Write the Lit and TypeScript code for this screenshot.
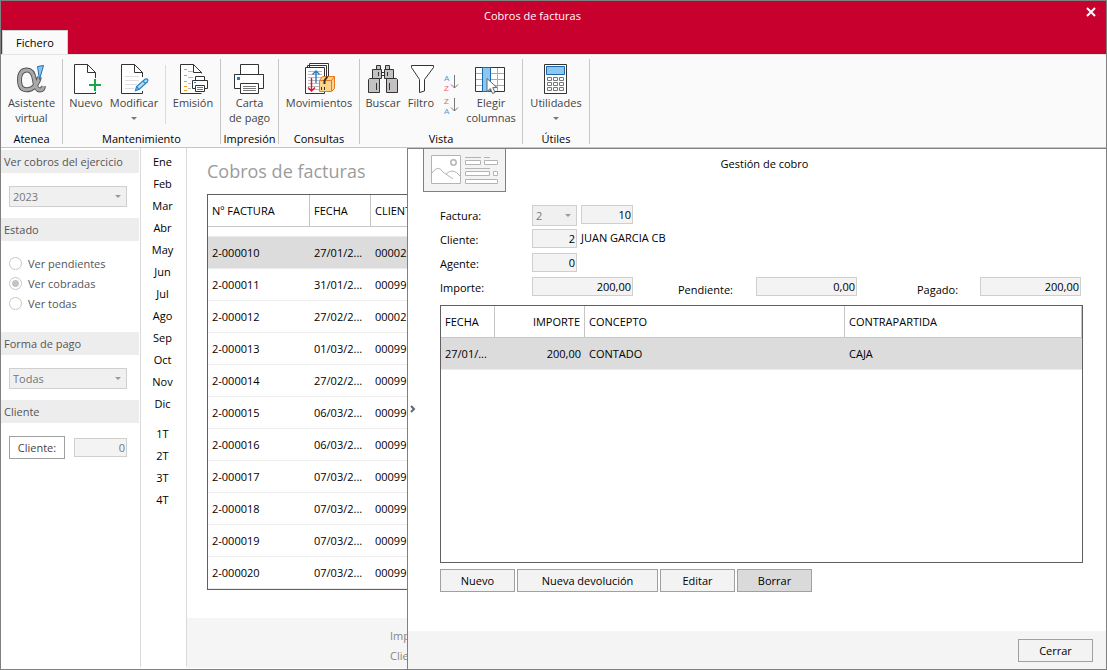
import { LitElement, html, css, svg, nothing } from "lit";
import { customElement } from "lit/decorators.js";
import { classMap } from "lit/directives/class-map.js";

const logoLoop = "M23.5 14Q21 23 15 26Q3.5 29.5 3.5 17Q3.5 7 11 7Q17 7 18.5 17Q19.5 27 24 27Q27 27 27.5 23";

const icons: Record<string, unknown> = {
  logo: svg`
    <path d=${logoLoop} stroke="#555" stroke-width="5"/>
    <path d=${logoLoop} stroke="#a9a9a9" stroke-width="3"/>
    <path d="M21.5 3.5L27.5 2.5L23.5 16.5Z" fill="#8cc4f0" stroke="#1f6fb5"/>`,
  nuevo: svg`
    <path d="M25.5 15V9.5L17.5 1.5H4.5V30.5H25.5V29M17.5 1.5V9.5H25.5" fill="#fff" stroke="#333"/>
    <path d="M25 16V28M19 22H31" stroke="#1aa64b" stroke-width="2"/>`,
  modificar: svg`
    <path d="M24.5 14V9.5L16.5 1.5H3.5V30.5H24.5V28M16.5 1.5V9.5H24.5" fill="#fff" stroke="#333"/>
    <path d="M7 13.5H21M7 17.5H21M7 21.5H19M7 25.5H16" stroke="#dedede"/>
    <path d="M17.5 27.5L18.6 23.6L27 16.3Q28.6 15.2 29.6 16.4Q30.4 17.6 29.2 19L21 26.4ZM18.6 23.6L21 26.4M25 18L27.4 20.6" fill="#b9dcf5" stroke="#2484c6" stroke-width="1.2"/>`,
  emision: svg`
    <path d="M24.5 10.5V9.5L16.5 1.5H3.5V30.5H24.5M16.5 1.5V9.5H24.5" fill="#fff" stroke="#333"/>
    <path d="M7 6.5H10M7 12.5H10M7 18.5H10M7 23.5H10M7 27.5H10" stroke="#f09a1a"/>
    <path d="M11 8.5H16M11 14.5H16M11 20.5H14M11 25.5H14" stroke="#bbb"/>
    <path d="M18.5 17.5V13.5H27.5V17.5M18.5 25.5H15.5V17.5H30.5V25.5H27.5M18.5 22.5H27.5V28.5H18.5Z" fill="#fff" stroke="#333"/>
    <path d="M20 24.5H26M20 26.5H26" stroke="#777"/><path d="M17 19.5H19" stroke="#2484c6"/>`,
  carta: svg`
    <path d="M6.5 11.5V1.5H24.5V11.5M6.5 25.5H0.5V11.5H29.5V25.5H24.5M6.5 20.5H24.5V30.5H6.5Z" fill="#fff" stroke="#333"/>
    <path d="M0.5 11.5H29.5" stroke="#333"/>
    <path d="M9 23.5H22M9 25.5H22M9 27.5H22" stroke="#777"/>
    <path d="M3 14H6V17H3Z" fill="#1e7fca"/>`,
  movimientos: svg`
    <path d="M6.5 5V0.5H25.5V14M4.5 5V2.5H23.5V14M2.5 4.5H21.5V30.5H2.5Z" fill="#fff" stroke="#333"/>
    <path d="M5 8.5H19M5 11.5H19M5 14.5H19M5 17.5H16M5 20.5H16M5 23.5H16M5 26.5H16" stroke="#bbb"/>
    <path d="M13 20V8M9.5 11.5L13 8L16.5 11.5" fill="none" stroke="#1e7fca" stroke-width="1.4"/>
    <path d="M8.5 15V28M5 24.5L8.5 28L12 24.5" fill="none" stroke="#e0102f" stroke-width="1.4"/>
    <path d="M16.5 17.5L19.5 13.5H31.5V25.5L28.5 28.5H16.5Z" fill="#f9d48a" stroke="#e77a25"/>
    <path d="M16.5 17.5H28.5V28.5M28.5 17.5L31.5 13.5" stroke="#e77a25"/>
    <path d="M21.5 21V17.5L24.5 13.5" fill="none" stroke="#333" stroke-width="2"/>
    <path d="M18.5 24V27M21.5 24V27" stroke="#333"/>`,
  buscar: svg`
    <g fill="#c3c1c1" stroke="#333">
      <path d="M14 9.5H18V12.5H14Z" fill="#fff"/>
      <path d="M9.5 6.5V2.5H13.5V6.5M18.5 6.5V2.5H22.5V6.5"/>
      <path d="M5.5 6.5H14.5V15.5H5.5ZM17.5 6.5H26.5V15.5H17.5Z"/>
      <path d="M2.5 15.5H12.5V29.5H1.5V16.5ZM19.5 15.5H29.5L30.5 16.5V29.5H19.5Z"/>
      <path d="M11.5 9V13M20.5 9V13M9.5 20V27M22.5 20V27" fill="none"/>
    </g>`,
  filtro: svg`<path d="M6.5 2.5H28.5V4.5L19.5 16.5V28L14.5 29.5V16.5L6.5 4.5Z" fill="#fff" stroke="#333"/>`,
  elegir: svg`
    <path d="M0.5 4.5H29.5V28.5H0.5Z" fill="#fff"/>
    <path d="M1 10.5H29M1 16.5H29M1 22.5H29M22.5 5V28" stroke="#aaa"/>
    <path d="M0.5 4.5H29.5V28.5H0.5Z" fill="none" stroke="#333"/>
    <path d="M7.5 4.5H15.5V28.5H7.5Z" fill="#8ec6ee" stroke="#1668b0"/>
    <path d="M12 15.5V28.5L15.3 25.6L17.6 30.5L20 29.4L17.8 24.6H22Z" fill="#fff" stroke="#666"/>`,
  utilidades: svg`
    <path d="M4.5 1.5H26.5V30.5H4.5Z" fill="#fff" stroke="#333"/>
    <path d="M6.5 3.5H24.5V11.5H6.5Z" fill="#8ec6ee" stroke="#1668b0"/>
    <path d="M7.5 14.5H11.5V17.5H7.5ZM13.5 14.5H17.5V17.5H13.5ZM19.5 14.5H23.5V17.5H19.5ZM7.5 19.5H11.5V22.5H7.5ZM13.5 19.5H17.5V22.5H13.5ZM19.5 19.5H23.5V22.5H19.5ZM7.5 24.5H11.5V27.5H7.5ZM13.5 24.5H17.5V27.5H13.5ZM19.5 24.5H23.5V27.5H19.5Z" fill="none" stroke="#777"/>`,
};

const invoices: [string, string, string][] = [
  ["2-000010", "27/01/2...", "00002"],
  ["2-000011", "31/01/2...", "00099"],
  ["2-000012", "27/02/2...", "00002"],
  ["2-000013", "01/03/2...", "00099"],
  ["2-000014", "27/02/2...", "00099"],
  ["2-000015", "06/03/2...", "00099"],
  ["2-000016", "06/03/2...", "00099"],
  ["2-000017", "07/03/2...", "00099"],
  ["2-000018", "07/03/2...", "00099"],
  ["2-000019", "07/03/2...", "00099"],
  ["2-000020", "07/03/2...", "00099"],
];

const months = ["Ene", "Feb", "Mar", "Abr", "May", "Jun", "Jul", "Ago", "Sep", "Oct", "Nov", "Dic"];
const quarters = ["1T", "2T", "3T", "4T"];

@customElement("app-root")
export class AppRoot extends LitElement {
  static styles = css`
    :host {
      display: block;
      font-family: "Open Sans", "Noto Sans", sans-serif;
      font-size: 11px;
      line-height: 15px;
      color: #000;
    }
    * { box-sizing: border-box; }
    button, input, select { font: inherit; color: inherit; margin: 0; border-radius: 0; }
    button { padding: 0; border: 0; background: none; white-space: nowrap; }
    svg { display: block; fill: none; }
    .window {
      display: flex; flex-direction: column; height: 100vh; min-height: 640px;
      border: 1px solid #808080; background: #fff; overflow: hidden;
    }
    .titlebar { display: grid; grid-template-columns: 1fr 42px; height: 29px; background: #c8002d; color: #fff; text-align: center; }
    .titlebar h1 { margin: 0; padding-top: 7px; font-size: 11px; font-weight: 400; }
    .close { display: flex; justify-content: center; padding-top: 6px; margin-left: 12px; }
    .tabs { display: flex; height: 24px; padding-left: 1px; background: #c8002d; }
    .tab { width: 66px; background: #fafafa; border: 1px solid #d0d0d0; border-bottom: 0; }
    .ribbon { display: flex; height: 94px; padding: 4px 0 3px; background: #fafafa; border-bottom: 1px solid #c6c6c6; border-top: 1px solid #e4e4e4; }
    .group { display: flex; flex-direction: column; justify-content: space-between; border-right: 1px solid #c6c6c6; }
    .tools { display: flex; }
    .group-name { height: 13px; white-space: nowrap; display: flex; justify-content: center; }
    .tool { display: flex; flex-direction: column; align-items: center; padding-top: 4px; color: #444; }
    .arrow { margin-top: 7px; border: 3px solid transparent; border-top-color: #777; border-bottom: 0; }
    .rule { width: 1px; height: 59px; margin: 6px 0 0 6px; background: #dcdcdc; }
    .sorts { display: flex; flex-direction: column; width: 30px; padding-top: 14px; gap: 3px; align-items: center; }
    .w30 { width: 30px; } .w46 { width: 46px; } .w50 { width: 50px; } .w54 { width: 54px; }
    .w57 { width: 57px; } .w61 { width: 61px; } .w66 { width: 66px; } .w80 { width: 80px; }
    .vista { padding-right: 6px; }
    .body { flex: 1; display: flex; min-height: 0; }
    .filters { width: 140px; border-right: 1px solid #dadada; color: #555; padding-top: 2px; margin-bottom: 2px; }
    .filters h2 { margin: 0 1px 0 0; padding: 4px 3px; height: 23px; background: #ededed; font-size: 11px; font-weight: 400; white-space: nowrap; }
    .field { padding: 13px 13px 11px 8px; }
    .pick { position: relative; display: block; height: 21px; }
    .pick select {
      appearance: none; width: 100%; height: 21px; padding: 0 3px; border: 1px solid #cfcfcf;
      background: #f0f0f0; color: #777; opacity: 1; display: block;
    }
    .pick::after {
      content: ""; position: absolute; right: 6px; top: 9px;
      border: 3px solid transparent; border-top-color: #999; border-bottom: 0; pointer-events: none;
    }
    .radios { display: flex; flex-direction: column; gap: 5px; padding: 15px 8px 20px; height: 91px; }
    .radios label { display: flex; align-items: center; gap: 6px; }
    .radios input { appearance: none; width: 13px; height: 13px; border: 1px solid #c8c8c8; border-radius: 50%; background: #fff; }
    .radios input:checked { background: radial-gradient(circle, #c4c4c4 3px, #fff 4px); }
    .client { display: flex; align-items: center; gap: 9px; padding: 13px 13px 0 8px; }
    .client .btn { width: 56px; background: #fff; color: #444; }
    .client input { flex: 1; min-width: 0; color: #777; }
    .box { height: 19px; padding: 0 1px 1px; border: 1px solid #cfcfcf; background: #f3f3f3; text-align: right; }
    .btn { height: 23px; border: 1px solid #a0a0a0; background: #f3f3f3; }
    .btn.on { background: #dadada; }
    .periods { display: flex; flex-direction: column; width: 46px; border-right: 1px solid #dadada; padding: 2px 2px 0 0; margin-bottom: 2px; }
    .periods button { height: 22px; }
    .periods .gap { margin-top: 8px; }
    .list { flex: 0 0 220px; display: flex; flex-direction: column; overflow: hidden; }
    .list h2 { margin: 0; padding: 9px 0 9px 20px; font-size: 18px; line-height: 28px; font-weight: 400; color: #9c9c9c; white-space: nowrap; }
    .frame { margin-left: 20px; width: 400px; border: 1px solid #606060; }
    table { border-collapse: separate; border-spacing: 0; table-layout: fixed; width: 100%; font-size: 11px; }
    th { height: 32px; padding: 0 4px; font-weight: 400; text-align: left; border-right: 1px solid #c6c6c6; border-bottom: 1px solid #c6c6c6; }
    td { height: 32px; padding: 0 4px; border-bottom: 1px solid #ececec; white-space: nowrap; overflow: hidden; }
    .spacer td { height: 10px; }
    .sel td { background: #dcdcdc; }
    .right { text-align: right; }
    .totals { margin-top: auto; margin-bottom: 1px; padding: 8px 0 2px 203px; height: 50px; background: #f5f5f5; color: #868686; line-height: 20px; white-space: nowrap; }
    .panel { flex: 1; min-width: 0; display: flex; flex-direction: column; border-left: 1px solid #808080; border-top: 1px solid #808080; position: relative; }
    .panel-head { position: relative; margin-left: 15px; height: 43px; }
    .panel-head h2 { margin: 0; padding-top: 7px; font-size: 11px; font-weight: 400; text-align: center; }
    .badge { position: absolute; left: 0; top: 0; width: 83px; height: 43px; border: 1px solid #808080; border-top: 0; background: #f3f3f3; }
    .handle { position: absolute; left: 2px; top: 256px; }
    .content { flex: 1; display: flex; flex-direction: column; padding: 13px 23px 39px 32px; min-height: 0; }
    .form { display: flex; flex-direction: column; gap: 5px; padding-right: 2px; }
    .row { display: flex; align-items: flex-start; height: 19px; gap: 4px; }
    .row > label { flex: 0 0 88px; padding-top: 3px; }
    .row > output { padding-top: 1px; }
    .s45 { width: 45px; } .s52 { width: 52px; } .s101 { width: 101px; }
    .amounts { display: flex; justify-content: space-between; }
    .amount { display: flex; align-items: flex-end; height: 19px; }
    .amount > label { line-height: 13px; }
    .amount.mid { padding-right: 15px; }
    .amount.mid label { width: 78px; }
    .amount.end label { width: 63px; }
    .grid { flex: 1; margin-top: 9px; border: 1px solid #606060; }
    .actions { display: flex; gap: 2px; margin-top: 6px; }
    .b75 { width: 75px; } .b141 { width: 141px; }
    .panel-foot { display: flex; justify-content: flex-end; padding: 8px 13px 6px; background: #f4f4f4; height: 38px; }
  `;

  private tool(icon: string, width: string, first: string, second?: string, arrow = false) {
    return html`<button class="tool ${width}">
      <svg width="32" height="32" viewBox="0 0 32 32" aria-hidden="true">${icons[icon]}</svg>
      <span>${first}</span>${second ? html`<span>${second}</span>` : nothing}${arrow ? html`<i class="arrow"></i>` : nothing}
    </button>`;
  }

  private group(name: string, tools: unknown, extra = "") {
    return html`<div class="group"><div class="tools ${extra}">${tools}</div><div class="group-name">${name}</div></div>`;
  }

  private sort(top: string, bottom: string) {
    const color = (c: string) => (c === "A" ? "#4a9cd6" : "#ea6464");
    return html`<button aria-label="Ordenar ${top}-${bottom}">
      <svg width="18" height="20" viewBox="0 0 18 20" font-size="8" font-family="Liberation Sans, sans-serif">
        <text x="2" y="8" fill=${color(top)}>${top}</text>
        <text x="2" y="18" fill=${color(bottom)}>${bottom}</text>
        <path d="M12.5 2V15M9 11.5L12.5 15L16 11.5" stroke="#777"/>
      </svg></button>`;
  }

  render() {
    return html`<div class="window">
      <header class="titlebar">
        <h1>Cobros de facturas</h1>
        <button class="close" aria-label="Cerrar ventana">
          <svg width="10" height="10" viewBox="0 0 10 10"><path d="M1 1L9 9M9 1L1 9" stroke="#fff" stroke-width="2"/></svg>
        </button>
      </header>
      <nav class="tabs"><button class="tab">Fichero</button></nav>
      <div class="ribbon">
        ${this.group("Atenea", this.tool("logo", "w61", "Asistente", "virtual"))}
        ${this.group("Mantenimiento", html`
          ${this.tool("nuevo", "w46", "Nuevo")}
          ${this.tool("modificar", "w50", "Modificar", undefined, true)}
          <div class="rule"></div>
          ${this.tool("emision", "w54", "Emisión")}`)}
        ${this.group("Impresión", this.tool("carta", "w57", "Carta", "de pago"))}
        ${this.group("Consultas", this.tool("movimientos", "w80", "Movimientos"))}
        ${this.group("Vista", html`
          ${this.tool("buscar", "w46", "Buscar")}
          ${this.tool("filtro", "w30", "Filtro")}
          <div class="sorts">${this.sort("A", "Z")}${this.sort("Z", "A")}</div>
          ${this.tool("elegir", "w50", "Elegir", "columnas")}`, "vista")}
        ${this.group("Útiles", this.tool("utilidades", "w66", "Utilidades", undefined, true))}
      </div>
      <div class="body">
        <aside class="filters">
          <h2 id="year">Ver cobros del ejercicio</h2>
          <div class="field"><span class="pick"><select aria-labelledby="year" disabled><option>2023</option></select></span></div>
          <h2>Estado</h2>
          <div class="radios">
            ${["Ver pendientes", "Ver cobradas", "Ver todas"].map((t, i) => html`
              <label><input type="radio" name="estado" disabled ?checked=${i === 1}>${t}</label>`)}
          </div>
          <h2 id="payment">Forma de pago</h2>
          <div class="field"><span class="pick"><select aria-labelledby="payment" disabled><option>Todas</option></select></span></div>
          <h2>Cliente</h2>
          <div class="client">
            <button class="btn">Cliente:</button>
            <input class="box" aria-label="Cliente" value="0" disabled>
          </div>
        </aside>
        <nav class="periods">
          ${months.map((m) => html`<button>${m}</button>`)}
          ${quarters.map((q, i) => html`<button class=${classMap({ gap: i === 0 })}>${q}</button>`)}
        </nav>
        <section class="list">
          <h2>Cobros de facturas</h2>
          <div class="frame">
            <table>
              <colgroup><col style="width:102px"><col style="width:61px"><col></colgroup>
              <thead><tr><th>Nº FACTURA</th><th>FECHA</th><th>CLIENTE</th></tr></thead>
              <tbody>
                <tr class="spacer"><td></td><td></td><td></td></tr>
                ${invoices.map((r, i) => html`<tr class=${classMap({ sel: i === 0 })}>${r.map((c) => html`<td>${c}</td>`)}</tr>`)}
              </tbody>
            </table>
          </div>
          <div class="totals"><div>Importe</div><div>Cliente</div></div>
        </section>
        <section class="panel">
          <div class="panel-head">
            <h2>Gestión de cobro</h2>
            <div class="badge">
              <svg width="81" height="42" viewBox="0 0 81 42" stroke="#b4b4b4">
                <path d="M7.5 6.5H36.5V34.5H7.5Z" fill="#fff"/>
                <circle cx="29.5" cy="13.5" r="2.7" stroke-width="1.5"/>
                <path d="M8 24Q14 15 19 23L29 30M22 25Q29 18 36 27"/>
                <path d="M41 8.5H57M60 8.5H66M41 19.5H66"/>
                <path d="M41.5 11.5H56.5V15.5H41.5ZM60.5 11.5H73.5V15.5H60.5ZM41.5 22.5H65.5V26.5H41.5ZM69.5 22.5H73.5V26.5H69.5ZM41.5 30.5H73.5V34.5H41.5Z" fill="#fff"/>
              </svg>
            </div>
          </div>
          <button class="handle" aria-label="Contraer">
            <svg width="6" height="8" viewBox="0 0 6 8"><path d="M1 1L4 4L1 7" stroke="#666" stroke-width="2"/></svg>
          </button>
          <div class="content">
            <div class="form">
              <div class="row">
                <label for="serie">Factura:</label>
                <span class="pick s45"><select id="serie" disabled><option>2</option></select></span>
                <input class="box s52" aria-label="Número de factura" value="10" readonly>
              </div>
              <div class="row"><label for="cliente">Cliente:</label><input class="box s45" id="cliente" value="2" readonly><output for="cliente">JUAN GARCIA CB</output></div>
              <div class="row"><label for="agente">Agente:</label><input class="box s45" id="agente" value="0" readonly></div>
              <div class="amounts">
                <div class="row"><label for="importe">Importe:</label><input class="box s101" id="importe" value="200,00" readonly></div>
                <div class="amount mid"><label for="pendiente">Pendiente:</label><input class="box s101" id="pendiente" value="0,00" readonly></div>
                <div class="amount end"><label for="pagado">Pagado:</label><input class="box s101" id="pagado" value="200,00" readonly></div>
              </div>
            </div>
            <div class="grid">
              <table>
                <colgroup><col style="width:54px"><col style="width:90px"><col style="width:260px"><col></colgroup>
                <thead><tr><th>FECHA</th><th class="right">IMPORTE</th><th>CONCEPTO</th><th>CONTRAPARTIDA</th></tr></thead>
                <tbody><tr class="sel"><td>27/01/...</td><td class="right">200,00</td><td>CONTADO</td><td>CAJA</td></tr></tbody>
              </table>
            </div>
            <div class="actions">
              <button class="btn b75">Nuevo</button>
              <button class="btn b141">Nueva devolución</button>
              <button class="btn b75">Editar</button>
              <button class="btn b75 on">Borrar</button>
            </div>
          </div>
          <footer class="panel-foot"><button class="btn b75">Cerrar</button></footer>
        </section>
      </div>
    </div>`;
  }
}
